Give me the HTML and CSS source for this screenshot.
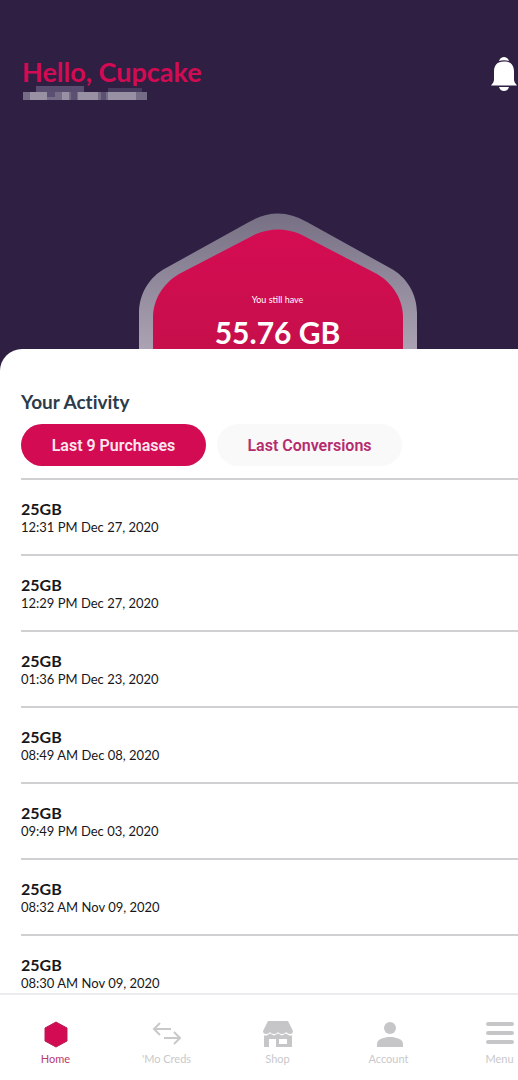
FILE: index.html
```html
<!DOCTYPE html>
<html lang="en">
<head>
<meta charset="utf-8">
<meta name="viewport" content="width=device-width, initial-scale=1">
<title>Home</title>
<link rel="stylesheet" href="styles.css">
</head>
<body>
<div class="app">
  <header class="hero">
    <div class="topbar">
      <div class="greeting">
        <h1 class="hello">Hello, Cupcake</h1>
        <svg class="hidden-number" viewBox="0 0 126 16" aria-hidden="true">
          <g fill="#594e70"><path d="M14 0h48v6H14z"/><path d="M86 2h34v4H86z" opacity=".6"/></g>
          <path fill="#756d87" d="M1 6h124v8H1z"/>
          <path fill="#9891a4" d="M8 6h17v8H8zM40 6h7v8h-7zM56 6h20v8H56zM86 6h28v8H86z"/>
          <path fill="#5b5071" d="M25 6h8v5h-8zM49 6h6v8h-6zM79 6h5v8h-5z"/>
        </svg>
      </div>
      <button class="bell" type="button" aria-label="Notifications">
        <svg viewBox="0 0 26 34" width="26" height="34"><path fill="#fff" d="M8 4C9 1 11 0 13 0s4 1 5 4c-3-1-7-1-10 0zM13 4.500c7 0 10 4 10 10V22c0 3 1 4 3 6.500H0C2 26 3 25 3 22v-7.500c0-6 3-10 10-10zM8 30h10c-1 3-3 4-5 4s-4-1-5-4z"/></svg>
      </button>
    </div>
    <div class="balance">
      <svg class="hexagon" viewBox="0 0 278 136" aria-hidden="true">
        <defs>
          <linearGradient id="rim" x1="0" y1="0" x2="0" y2="1"><stop offset="0" stop-color="#777084"/><stop offset="1" stop-color="#aba3b3"/></linearGradient>
          <linearGradient id="fill" x1="0" y1="0" x2="0" y2="1"><stop offset="0" stop-color="#d50c52"/><stop offset="1" stop-color="#c60f4b"/></linearGradient>
        </defs>
        <path fill="url(#rim)" d="M0 136V100C0 81 10 64 27 55L110 9Q139-8 168 9L251 55C268 64 278 81 278 100V136z"/>
        <path fill="url(#fill)" d="M14 136V104C14 88 23 71 40 61L117 21Q139 12 161 21L238 61C255 71 264 88 264 104V136z"/>
      </svg>
      <div class="balance-text">
        <p class="balance-label">You still have</p>
        <p class="balance-value">55.76 GB</p>
      </div>
    </div>
  </header>
  <main class="panel">
    <h2 class="title">Your Activity</h2>
    <div class="tabs">
      <button class="tab tab-active" type="button">Last 9 Purchases</button>
      <button class="tab" type="button">Last Conversions</button>
    </div>
    <ul class="list">
      <li class="item"><strong class="amount">25GB</strong><span class="date">12:31 PM Dec 27, 2020</span></li>
      <li class="item"><strong class="amount">25GB</strong><span class="date">12:29 PM Dec 27, 2020</span></li>
      <li class="item"><strong class="amount">25GB</strong><span class="date">01:36 PM Dec 23, 2020</span></li>
      <li class="item"><strong class="amount">25GB</strong><span class="date">08:49 AM Dec 08, 2020</span></li>
      <li class="item"><strong class="amount">25GB</strong><span class="date">09:49 PM Dec 03, 2020</span></li>
      <li class="item"><strong class="amount">25GB</strong><span class="date">08:32 AM Nov 09, 2020</span></li>
      <li class="item"><strong class="amount">25GB</strong><span class="date">08:30 AM Nov 09, 2020</span></li>
    </ul>
  </main>
  <nav class="nav">
    <div class="nav-items">
      <a class="nav-item nav-current" href="#"><svg viewBox="0 0 30 28" width="30" height="28"><path fill="#d20b52" stroke="#b51f56" d="M15 2l11 6v13l-11 6-11-6V8z"/></svg>Home</a>
      <a class="nav-item" href="#"><svg viewBox="0 0 30 28" width="30" height="28"><path fill="none" stroke="#c9c9cb" stroke-width="2" d="M8 3L2 9l6 6M2 9h17M22 12l6 6-6 6M28 18H12"/></svg>'Mo Creds</a>
      <a class="nav-item" href="#"><svg viewBox="0 0 30 28" width="30" height="28"><path fill="#c6c6c8" d="M5 1h20l5 10q0 3-3 3-2 0-4-2-1 2-4 2t-4-2q-1 2-4 2t-4-2q-1 2-4 2-3 0-3-3z"/><path fill="#c6c6c8" fill-rule="evenodd" d="M1 15.500h3l3-2 4 2 4-2 4 2 4-2 3 2h3V27H13v-8H6v8H1zM16 19v5h8v-5z"/></svg>Shop</a>
      <a class="nav-item" href="#"><svg viewBox="0 0 30 28" width="30" height="28"><g fill="#c6c6c8"><circle cx="16" cy="8" r="6"/><path d="M3 27v-3c0-5 7-7 13-7s13 2 13 7v3z"/></g></svg>Account</a>
      <a class="nav-item" href="#"><svg viewBox="0 0 30 28" width="30" height="28"><path fill="none" stroke="#c6c6c8" stroke-width="4" stroke-linecap="round" d="M3 4h24M3 13h24M3 22h24"/></svg>Menu</a>
    </div>
  </nav>
</div>
</body>
</html>
```
FILE: styles.css
```css
:root {
  --bleed: 37px;
  --pink: #d20b52;
  --night: #2e1f43;
}
* { box-sizing: border-box; }
body, h1, h2, p, ul { margin: 0; padding: 0; }
body {
  background: var(--night);
  font-family: Lato, "Open Sans", sans-serif;
  color: #17171a;
}
button { border: 0; padding: 0; font: inherit; cursor: pointer; }
svg { display: block; }
.app {
  display: flex;
  flex-direction: column;
  height: 100vh;
  overflow: hidden;
}
.hero { flex: none; }
.topbar {
  display: flex;
  justify-content: space-between;
  align-items: flex-start;
  padding: 57px 1px 0 22px;
}
.hello {
  font-size: 27px;
  line-height: 29px;
  font-weight: 700;
  color: var(--pink);
}
.hidden-number { width: 126px; height: 16px; }
.bell { background: none; }
.balance {
  display: grid;
  justify-items: center;
  margin: 111px calc(var(--bleed) * -1) 0 0;
}
.hexagon { grid-area: 1 / 1; width: 278px; height: 136px; }
.balance-text {
  grid-area: 1 / 1;
  padding-top: 80px;
  text-align: center;
  color: #fff;
}
.balance-label { font-size: 9px; line-height: 13px; }
.balance-value {
  padding-top: 9px;
  font-size: 30px;
  line-height: 34px;
  font-weight: 700;
}
.panel {
  flex: 1;
  min-height: 0;
  overflow: hidden;
  padding: 40px 0 0 21px;
  border-radius: 22px 0 0 0;
  background: #fff;
}
.title {
  font-size: 19px;
  line-height: 26px;
  font-weight: 700;
  font-variant-ligatures: none;
  color: #2c3b4b;
}
.tabs { display: flex; gap: 11px; padding: 9px 0 12px; }
.tab {
  width: 185px;
  height: 42px;
  border-radius: 21px;
  background: #f9f9fa;
  color: #b52c6e;
  font-family: Roboto, sans-serif;
  font-size: 16px;
  font-weight: 600;
}
.tab-active { background: var(--pink); color: #fbe6f0; }
.list { list-style: none; }
.item {
  display: flex;
  flex-direction: column;
  height: 76px;
  padding-top: 20px;
  border-top: 2px solid #d0d0d3;
}
.amount { font-size: 16px; line-height: 18px; font-weight: 700; }
.date { font-size: 13px; line-height: 18px; }
.nav {
  flex: none;
  height: 87px;
  overflow: hidden;
  border-top: 2px solid #ececee;
  background: #fff;
}
.nav-items {
  display: grid;
  grid-template-columns: repeat(5, 1fr);
  margin-right: calc(var(--bleed) * -1);
  padding-top: 25px;
}
.nav-item {
  display: flex;
  flex-direction: column;
  align-items: center;
  gap: 4px;
  font-size: 11px;
  line-height: 14px;
  color: #c9c9cb;
  text-decoration: none;
}
.nav-current { color: #b93a70; }
```
